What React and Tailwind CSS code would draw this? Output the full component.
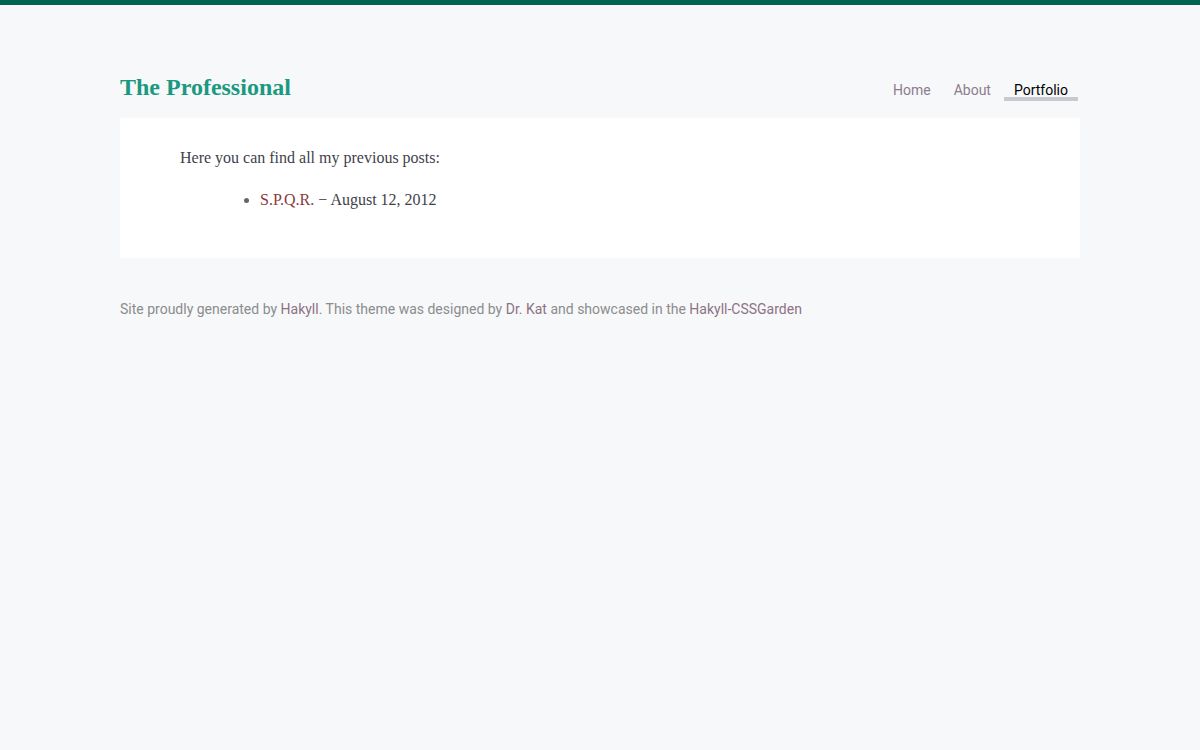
export default function App() {
  const serif = { fontFamily: '"Liberation Serif", "DejaVu Serif", serif' };
  return (
    <div className="min-h-[750px] bg-[#f7f8fa] border-t-[5px] border-[#00664f]" style={{ fontFamily: 'Roboto, "Liberation Sans", sans-serif' }}>
      <div className="w-[960px] mx-auto">
        {/* Header */}
        <header className="flex items-start justify-between h-[113px]">
          <h1 className="text-[24px] font-bold text-[#1b9880] leading-none pt-[70px]" style={serif}>
            The Professional
          </h1>
          <nav className="flex items-start text-[14px] leading-none pt-[78px] pr-[2px]">
            <a className="text-[#8d7c8d] px-[10px] border-b-4 border-transparent">Home</a>
            <a className="text-[#8d7c8d] px-[10px] ml-[3px] border-b-4 border-transparent">About</a>
            <a className="text-black px-[10px] ml-[3px] border-b-4 border-[#c9c9d1]">Portfolio</a>
          </nav>
        </header>

        {/* Content */}
        <main className="bg-white h-[140px] pt-[28px] px-[60px] text-[16px] text-[#3f3f4a]" style={serif}>
          <p>Here you can find all my previous posts:</p>
          <ul className="list-disc pl-[80px] mt-[18px] marker:text-[#666]">
            <li>
              <a className="text-[#8a3a3a]">S.P.Q.R.</a> &minus; August 12, 2012
            </li>
          </ul>
        </main>

        {/* Footer */}
        <footer className="mt-[41px] text-[14px] text-[#8c8c8c]">
          Site proudly generated by <a className="text-[#8d7284]">Hakyll</a>. This theme was designed by{' '}
          <a className="text-[#8d7284]">Dr. Kat</a> and showcased in the{' '}
          <a className="text-[#8d7284]">Hakyll-CSSGarden</a>
        </footer>
      </div>
    </div>
  );
}
